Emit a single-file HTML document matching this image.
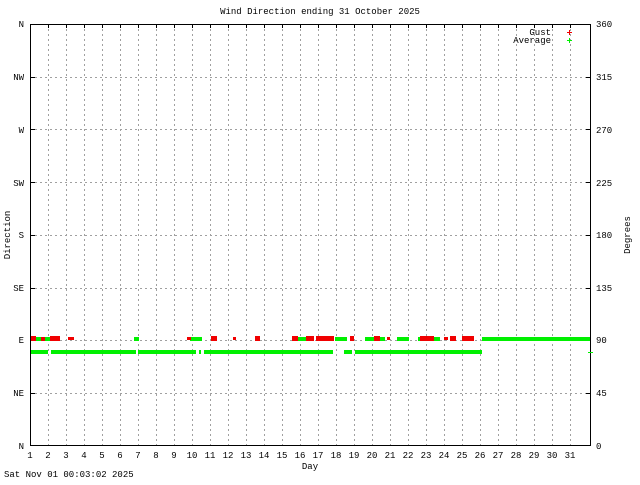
<!DOCTYPE html><html><head><style>body{margin:0;background:#fff}svg text{font-family:"Liberation Mono",monospace;font-size:9px;fill:#000}</style></head><body>
<svg width="640" height="480" xmlns="http://www.w3.org/2000/svg">
<g stroke="#a0a0a0" stroke-dasharray="2,3" stroke-width="1">
<path d="M48.5 24V446M66.5 24V446M84.5 24V446M102.5 24V446M120.5 24V446M138.5 24V446M156.5 24V446M174.5 24V446M192.5 24V446M210.5 24V446M228.5 24V446M246.5 24V446M264.5 24V446M282.5 24V446M300.5 24V446M318.5 24V446M336.5 24V446M354.5 24V446M372.5 24V446M390.5 24V446M408.5 24V446M426.5 24V446M444.5 24V446M462.5 24V446M480.5 24V446M498.5 24V446M516.5 24V446M534.5 24V446M552.5 24V446M570.5 24V446"/>
<path d="M30 77.5H591M30 129.5H591M30 182.5H591M30 235.5H591M30 288.5H591M30 340.5H591M30 393.5H591"/>
</g>
<rect x="30.5" y="24.5" width="560" height="421" fill="none" stroke="#000"/>
<g stroke="#000"><path d="M48.5 24v4M66.5 24v4M84.5 24v4M102.5 24v4M120.5 24v4M138.5 24v4M156.5 24v4M174.5 24v4M192.5 24v4M210.5 24v4M228.5 24v4M246.5 24v4M264.5 24v4M282.5 24v4M300.5 24v4M318.5 24v4M336.5 24v4M354.5 24v4M372.5 24v4M390.5 24v4M408.5 24v4M426.5 24v4M444.5 24v4M462.5 24v4M480.5 24v4M498.5 24v4M516.5 24v4M534.5 24v4M552.5 24v4M570.5 24v4"/>
<path d="M30 77.5h5M30 129.5h5M30 182.5h5M30 235.5h5M30 288.5h5M30 340.5h5M30 393.5h5M591 77.5h-5M591 129.5h-5M591 182.5h-5M591 235.5h-5M591 288.5h-5M591 340.5h-5M591 393.5h-5"/></g>
<g fill="#00f000">
<rect x="31" y="350" width="17" height="4"/><rect x="51" y="350" width="85" height="4"/><rect x="138" y="350" width="58" height="4"/><rect x="199" y="350" width="2" height="4"/><rect x="204" y="350" width="129" height="4"/><rect x="344" y="350" width="8" height="4"/><rect x="355" y="350" width="127" height="4"/>
<rect x="482" y="337" width="108" height="4"/>
<rect x="335" y="337" width="12" height="4"/><rect x="365" y="337" width="20" height="4"/><rect x="397" y="337" width="12" height="4"/><rect x="418" y="337" width="22" height="4"/><rect x="190" y="337" width="12" height="4"/><rect x="36" y="337" width="22" height="4"/><rect x="134" y="337" width="5" height="4"/><rect x="298" y="337" width="8" height="4"/>
</g>
<g fill="#f00000">
<rect x="31" y="336" width="5" height="5"/><rect x="41" y="337" width="4" height="4"/><rect x="50" y="336" width="10" height="5"/><rect x="68" y="337" width="6" height="3"/><rect x="187" y="337" width="4" height="3"/><rect x="211" y="336" width="6" height="5"/><rect x="233" y="337" width="3" height="3"/><rect x="255" y="336" width="5" height="5"/>
<rect x="292" y="336" width="6" height="5"/><rect x="306" y="336" width="8" height="5"/><rect x="316" y="336" width="18" height="5"/><rect x="350" y="336" width="4" height="5"/><rect x="374" y="336" width="6" height="5"/><rect x="387" y="337" width="3" height="3"/><rect x="420" y="336" width="14" height="5"/><rect x="444" y="337" width="4" height="3"/><rect x="450" y="336" width="6" height="5"/><rect x="462" y="336" width="12" height="5"/>
</g>
<rect x="567" y="32" width="5" height="1" fill="#f00000"/><rect x="569" y="30" width="1" height="5" fill="#f00000"/>
<rect x="567" y="40" width="5" height="1" fill="#00f000"/><rect x="569" y="38" width="1" height="5" fill="#00f000"/>
<rect x="588" y="352" width="5" height="1" fill="#00f000"/>
<text x="320" y="14" text-anchor="middle">Wind Direction ending 31 October 2025</text>
<text x="551" y="35" text-anchor="end">Gust</text><text x="551" y="43" text-anchor="end">Average</text>
<g text-anchor="end"><text x="24" y="27">N</text><text x="24" y="80">NW</text><text x="24" y="133">W</text><text x="24" y="186">SW</text><text x="24" y="238">S</text><text x="24" y="291">SE</text><text x="24" y="343">E</text><text x="24" y="396">NE</text><text x="24" y="449">N</text></g>
<g><text x="596" y="27">360</text><text x="596" y="80">315</text><text x="596" y="133">270</text><text x="596" y="186">225</text><text x="596" y="238">180</text><text x="596" y="291">135</text><text x="596" y="343">90</text><text x="596" y="396">45</text><text x="596" y="449">0</text></g>
<g text-anchor="middle"><text x="30" y="458">1</text><text x="48" y="458">2</text><text x="66" y="458">3</text><text x="84" y="458">4</text><text x="102" y="458">5</text><text x="120" y="458">6</text><text x="138" y="458">7</text><text x="156" y="458">8</text><text x="174" y="458">9</text><text x="192" y="458">10</text><text x="210" y="458">11</text><text x="228" y="458">12</text><text x="246" y="458">13</text><text x="264" y="458">14</text><text x="282" y="458">15</text><text x="300" y="458">16</text><text x="318" y="458">17</text><text x="336" y="458">18</text><text x="354" y="458">19</text><text x="372" y="458">20</text><text x="390" y="458">21</text><text x="408" y="458">22</text><text x="426" y="458">23</text><text x="444" y="458">24</text><text x="462" y="458">25</text><text x="480" y="458">26</text><text x="498" y="458">27</text><text x="516" y="458">28</text><text x="534" y="458">29</text><text x="552" y="458">30</text><text x="570" y="458">31</text></g>
<text x="310" y="469" text-anchor="middle">Day</text>
<text x="4" y="477">Sat Nov 01 00:03:02 2025</text>
<text transform="translate(10,235) rotate(-90)" text-anchor="middle">Direction</text>
<text transform="translate(630,235) rotate(-90)" text-anchor="middle">Degrees</text>
</svg></body></html>
